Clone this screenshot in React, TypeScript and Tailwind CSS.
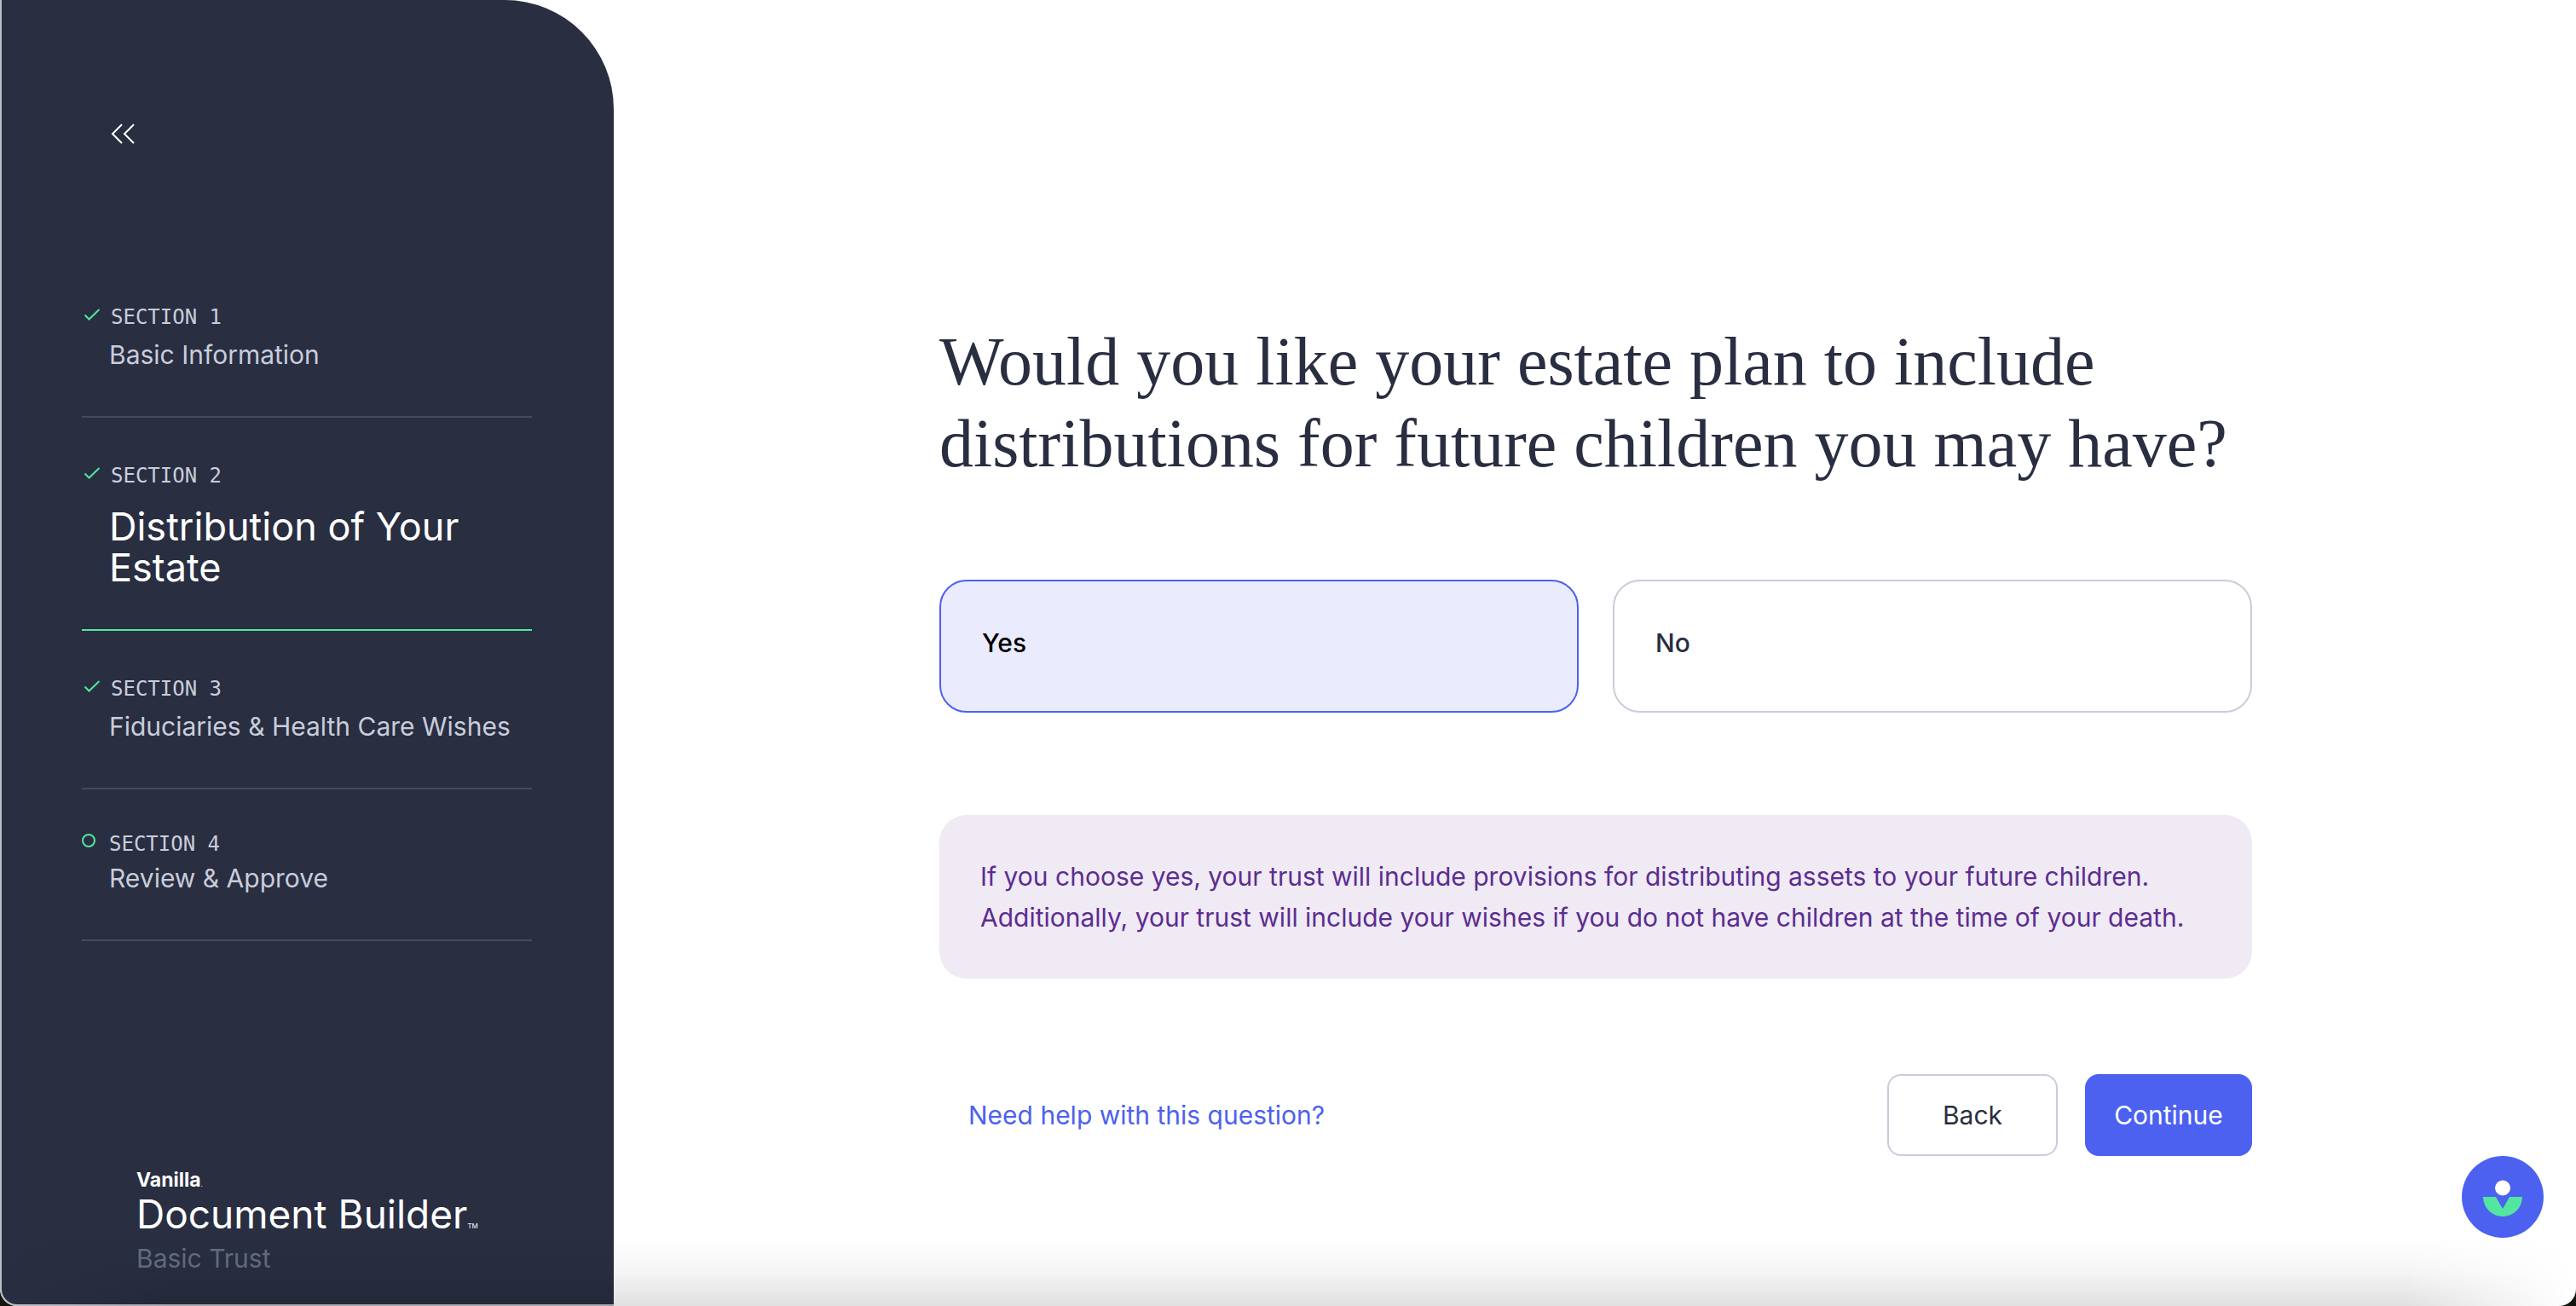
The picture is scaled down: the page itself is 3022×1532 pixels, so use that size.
import { useState } from "react";
import clsx from "clsx";

type Section = {
  label: string;
  title: string;
  done: boolean;
  active?: boolean;
};

const SECTIONS: Section[] = [
  { label: "Section 1", title: "Basic Information", done: true },
  { label: "Section 2", title: "Distribution of Your Estate", done: true, active: true },
  { label: "Section 3", title: "Fiduciaries & Health Care Wishes", done: true },
  { label: "Section 4", title: "Review & Approve", done: false },
];

const OPTIONS = ["Yes", "No"];

export default function App() {
  return (
    <div className="min-h-screen bg-[#14140f] font-['Inter',sans-serif] text-[30px] leading-[48px] text-[#292e41]">
      <div className="relative flex min-h-screen overflow-hidden rounded-b-[20px] bg-white">
        <Sidebar />
        <Question />

        {/* Shade along the bottom edge, fading out towards both corners */}
        <div className="pointer-events-none absolute inset-x-0 bottom-0 h-20 bg-linear-to-t from-black/12 via-black/4 to-transparent [mask-image:linear-gradient(to_right,transparent,black_200px,black_calc(100%-200px),transparent)]" />

        <button
          type="button"
          aria-label="Open assistant"
          className="absolute right-[38px] bottom-20 size-24 rounded-full bg-[#4c61f0]"
        >
          <SproutIcon />
        </button>
      </div>
    </div>
  );
}

/* ---------------------------------------------
   SIDEBAR
---------------------------------------------- */

function Sidebar() {
  return (
    <aside className="flex w-[720px] shrink-0 flex-col rounded-tr-[128px] rounded-bl-[20px] border-b-2 border-l-2 border-[#bcbec6] bg-[#292e41] pr-24 pb-[30px] pl-[94px]">
      <button type="button" aria-label="Collapse menu" className="mt-[141px] ml-8 size-8">
        <svg viewBox="0 0 32 32" fill="none" stroke="white" strokeWidth="2">
          <path d="M15 5 4 16l11 11M29 5 18 16l11 11" />
        </svg>
      </button>

      <nav aria-label="Sections" className="mt-[131px]">
        <ol>
          {SECTIONS.map((section) => (
            <SectionItem key={section.label} {...section} />
          ))}
        </ol>
      </nav>

      <footer className="mt-auto pl-16">
        <p className="text-[23px] leading-8 font-bold text-white">
          Vanilla<span className="text-[8px] leading-none font-normal">.</span>
        </p>
        <p className="text-[46px] leading-[48px] whitespace-nowrap text-white">
          Document Builder<span className="text-[8px] leading-none">TM</span>
        </p>
        <p className="mt-1 text-[#646c82]">Basic Trust</p>
      </footer>
    </aside>
  );
}

function SectionItem({ label, title, done, active }: Section) {
  return (
    <li
      className={clsx(
        "border-b-2 pb-12",
        done ? "pt-[52px]" : "pt-12",
        active ? "border-[#52e6a0]" : "border-[#454a5d]",
      )}
    >
      <a href="#section" aria-current={active ? "step" : undefined} className="block">
        <span className="flex items-start font-['DejaVu_Sans_Mono',monospace] text-2xl leading-8 text-[#c8cddb] uppercase">
          <span className={clsx("flex shrink-0", done ? "w-[34px] pt-px" : "w-8 pt-1")}>
            {done ? <CheckIcon /> : <CircleIcon />}
          </span>
          {label}
        </span>
        <span
          className={clsx(
            "block pl-8",
            active ? "mt-5 text-[45px] leading-[48px] text-white" : "text-[#c8cddb]",
            done && !active && "mt-1",
          )}
        >
          {title}
        </span>
      </a>
    </li>
  );
}

/* ---------------------------------------------
   QUESTION
---------------------------------------------- */

function Question() {
  const [answer, setAnswer] = useState("Yes");

  return (
    <main className="flex-1 pt-[376px] pr-16 pb-[176px] pl-[66px]">
      <form className="mx-auto max-w-[1540px]" onSubmit={(e) => e.preventDefault()}>
        <fieldset>
          <legend className="font-['Liberation_Serif',serif] text-[80px] leading-24">
            Would you like your estate plan to include distributions for future children you may have?
          </legend>

          <div className="mt-28 grid grid-cols-2 gap-10">
            {OPTIONS.map((option) => (
              <label
                key={option}
                className={clsx(
                  "flex h-[156px] cursor-pointer items-center rounded-[32px] border-2 px-12 pb-2 font-medium",
                  answer === option
                    ? "border-[#4c61f0] bg-[#eaebfd] text-black"
                    : "border-[#c8cddb] bg-white",
                )}
              >
                <input
                  type="radio"
                  name="future-children"
                  value={option}
                  checked={answer === option}
                  onChange={() => setAnswer(option)}
                  className="sr-only"
                />
                {option}
              </label>
            ))}
          </div>
        </fieldset>

        <p className="mt-[120px] rounded-[32px] bg-[#efeaf4] p-12 text-[#5c2d91]">
          If you choose yes, your trust will include provisions for distributing assets to your
          future children. Additionally, your trust will include your wishes if you do not have
          children at the time of your death.
        </p>

        <div className="mt-28 flex items-center gap-8">
          <a href="#help" className="mr-auto pl-[34px] text-[#4c61f0]">
            Need help with this question?
          </a>
          <button type="button" className="h-24 w-[200px] rounded-2xl border-2 border-[#c8cddb]">
            Back
          </button>
          <button type="submit" className="h-24 w-[196px] rounded-2xl bg-[#4c61f0] text-white">
            Continue
          </button>
        </div>
      </form>
    </main>
  );
}

/* ---------------------------------------------
   ICONS
---------------------------------------------- */

function CheckIcon() {
  return (
    <svg width="24" height="24" viewBox="0 0 24 24" fill="none" stroke="#52e6a0" strokeWidth="2">
      <path d="m3.500 12.500 5 5L20.500 6" />
    </svg>
  );
}

function CircleIcon() {
  return (
    <svg width="16" height="16" viewBox="0 0 16 16" fill="none" stroke="#52e6a0" strokeWidth="2">
      <circle cx="8" cy="8" r="7" />
    </svg>
  );
}

function SproutIcon() {
  return (
    <svg viewBox="0 0 96 96">
      <circle cx="48" cy="37.500" r="9" fill="white" />
      <path d="M25 48h15l8 14 8-14h15a23 23 0 0 1-46 0z" fill="#52e6a0" />
    </svg>
  );
}
